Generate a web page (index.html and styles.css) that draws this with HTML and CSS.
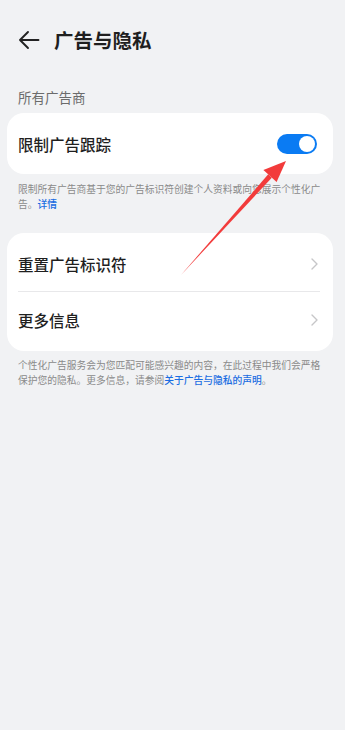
FILE: index.html
```html
<!DOCTYPE html>
<html lang="zh-CN">
<head>
<meta charset="utf-8">
<meta name="viewport" content="width=device-width, initial-scale=1">
<title>广告与隐私</title>
<link rel="stylesheet" href="styles.css">
</head>
<body>
<div class="page">
  <header class="header">
    <svg class="back" width="22" height="20" viewBox="0 0 22 20" aria-hidden="true">
      <path d="M20.5 10 H2 M10 2 L2 10 L10 18" fill="none" stroke="#222" stroke-width="1.9" stroke-linecap="round" stroke-linejoin="round"/>
    </svg>
    <h1 class="title">广告与隐私</h1>
  </header>

  <div class="section-label">所有广告商</div>

  <section class="card card-toggle">
    <span class="row-text">限制广告跟踪</span>
    <span class="switch"><span class="knob"></span></span>
  </section>

  <p class="note note-first">限制所有广告商基于您的广告标识符创建个人资料或向您展示个性化广告。<a class="link">详情</a></p>

  <section class="card card-list">
    <div class="row row-first">
      <span class="row-text">重置广告标识符</span>
      <svg class="chev" width="7" height="12" viewBox="0 0 7 12" aria-hidden="true"><path d="M1 1 L6 6 L1 11" fill="none" stroke="#c6c6c8" stroke-width="1.4" stroke-linecap="round" stroke-linejoin="round"/></svg>
    </div>
    <div class="divider"></div>
    <div class="row row-second">
      <span class="row-text">更多信息</span>
      <svg class="chev" width="7" height="12" viewBox="0 0 7 12" aria-hidden="true"><path d="M1 1 L6 6 L1 11" fill="none" stroke="#c6c6c8" stroke-width="1.4" stroke-linecap="round" stroke-linejoin="round"/></svg>
    </div>
  </section>

  <p class="note note-second">个性化广告服务会为您匹配可能感兴趣的内容，在此过程中我们会严格保护您的隐私。更多信息，请参阅<a class="link">关于广告与隐私的声明</a>。</p>

  <svg class="annot" width="345" height="730" viewBox="0 0 345 730" aria-hidden="true">
    <polygon points="181,275 268.2,174.3 271.8,177.7" fill="#f23b3b"/>
    <polygon points="286,161 263.4,169.9 276.6,182" fill="#f23b3b"/>
  </svg>
</div>
</body>
</html>
```

FILE: styles.css
```css
* { box-sizing: border-box; }

html, body {
  margin: 0;
  padding: 0;
  background: #f1f2f4;
}

body {
  font-family: "Noto Sans CJK SC", "Noto Sans", sans-serif;
  color: #1f1f1f;
}

.page {
  position: relative;
  width: 345px;
  min-height: 730px;
  display: flex;
  flex-direction: column;
}

.header {
  display: flex;
  align-items: center;
  height: 56px;
  margin-top: 12px;
  padding-left: 18px;
}

.back {
  display: block;
  flex: none;
}

.title {
  margin: 0 0 0 14px;
  font-size: 19.5px;
  font-weight: 600;
  color: #1f1f1f;
  line-height: 24px;
  letter-spacing: 0;
}

.section-label {
  margin-top: 19px;
  padding-left: 18px;
  font-size: 13.5px;
  line-height: 20px;
  color: #6b6b6b;
}

.card {
  margin: 0 12px 0 7px;
  background: #ffffff;
  border-radius: 17px;
}

.card-toggle {
  margin-top: 6px;
  height: 61px;
  display: flex;
  align-items: center;
  justify-content: space-between;
  padding: 0 16px 0 11px;
}

.row-text {
  font-size: 15.5px;
  font-weight: 500;
  color: #1f1f1f;
  line-height: 22px;
}

.switch {
  position: relative;
  width: 40px;
  height: 20px;
  border-radius: 10px;
  background: #0a7bf3;
  flex: none;
}

.knob {
  position: absolute;
  right: 2px;
  top: 2px;
  width: 16px;
  height: 16px;
  border-radius: 50%;
  background: #ffffff;
}

.note {
  margin: 0;
  padding: 0 18px;
  font-size: 9.75px;
  line-height: 15px;
  color: #8a8a8a;
}

.note-first {
  margin-top: 7.5px;
}

.link {
  color: #1a6de2;
  font-weight: 500;
}

.card-list {
  margin-top: 21.5px;
  padding: 4px 0 3px;
}

.row {
  display: flex;
  align-items: center;
  justify-content: space-between;
  padding: 0 15px 0 11px;
}

.row-first { height: 54px; }
.row-second { height: 56px; }

.chev { display: block; flex: none; }

.divider {
  height: 1px;
  margin: 0 13px 0 11px;
  background: #e8e8ea;
}

.note-second {
  margin-top: 7px;
}

.annot {
  position: absolute;
  left: 0;
  top: 0;
  pointer-events: none;
}
```
